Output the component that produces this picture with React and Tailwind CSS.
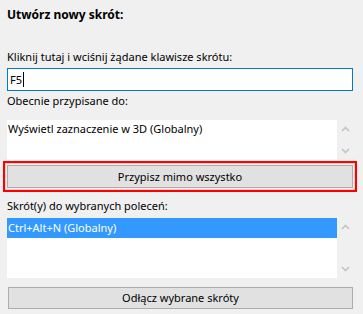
import React from "react";

function Chevron({ dir }) {
  return (
    <svg width="9" height="6" viewBox="0 0 9 6" className="block">
      {dir === "up" ? (
        <path d="M1 5 L4.5 1.5 L8 5" fill="none" stroke="#c4c4c4" strokeWidth="1.6" />
      ) : (
        <path d="M1 1 L4.5 4.5 L8 1" fill="none" stroke="#c4c4c4" strokeWidth="1.6" />
      )}
    </svg>
  );
}

export default function App() {
  return (
    <div
      className="w-[363px] h-[314px] bg-[#f0f0f0] pl-[7px] pr-[10px] flex flex-col text-[11px] leading-[16px] text-black overflow-hidden"
      style={{ fontFamily: '"Segoe UI", "Noto Sans", sans-serif' }}
    >
      <div className="mt-[7px] h-[16px] font-bold text-[12px]">Utwórz nowy skrót:</div>
      <div className="mt-[26px] h-[16px]">Kliknij tutaj i wciśnij żądane klawisze skrótu:</div>
      <div className="mt-[3px] h-[23px] border border-[#0078d7] bg-white flex items-center pl-[2px]">
        <span>F5</span>
        <span className="ml-[1px] w-[1px] h-[15px] bg-black"></span>
      </div>
      <div className="mt-[2px] h-[16px]">Obecnie przypisane do:</div>
      <div className="mt-[11px] h-[40px] flex">
        <div className="flex-1 bg-white pl-[1px] pt-[1px]">Wyświetl zaznaczenie w 3D (Globalny)</div>
        <div className="w-[16px] flex flex-col items-center justify-between pt-[6px] pb-[6px]">
          <Chevron dir="up" />
          <Chevron dir="down" />
        </div>
      </div>
      <div className="mt-[1px] h-[31px] ml-[-4px] mr-[-4px] border-2 border-[#ff0000]">
        <div className="h-full border border-[#ffc8c8] px-[1px] py-0 flex flex-col justify-center">
          <div className="h-[23px] bg-[#e1e1e1] border border-[#adadad] flex items-center justify-center">
            Przypisz mimo wszystko
          </div>
        </div>
      </div>
      <div className="mt-[6px] h-[16px]">Skrót(y) do wybranych poleceń:</div>
      <div className="mt-[4px] h-[60px] flex">
        <div className="flex-1 bg-white">
          <div className="h-[20px] bg-[#3399ff] text-white flex items-center pl-[1px]">Ctrl+Alt+N (Globalny)</div>
        </div>
        <div className="w-[16px] flex flex-col items-center justify-between pt-[6px] pb-[6px]">
          <Chevron dir="up" />
          <Chevron dir="down" />
        </div>
      </div>
      <div className="mt-[9px] h-[22px] ml-[1px] bg-[#e1e1e1] border border-[#adadad] flex items-center justify-center">
        Odłącz wybrane skróty
      </div>
    </div>
  );
}
